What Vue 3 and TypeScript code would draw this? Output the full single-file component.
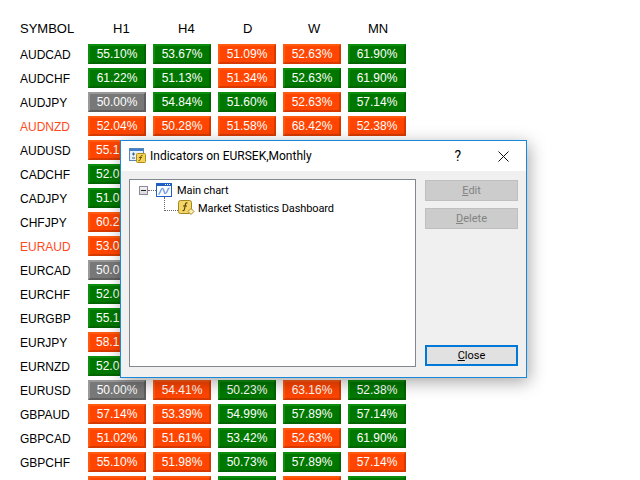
<script setup lang="ts">
type C = 'g' | 'o' | 'x'
interface Row { s: string; red?: boolean; v: [string, C][] }
const heads = ['H1', 'H4', 'D', 'W', 'MN']
const cc = (p: string): [string, C][] => p.split(' ').map((t) => {
  const k = t.slice(-1) as C
  return [t.slice(0, -1), k]
})
const rows: Row[] = [
  { s: 'AUDCAD', v: cc('55.10%g 53.67%g 51.09%o 52.63%o 61.90%g') },
  { s: 'AUDCHF', v: cc('61.22%g 51.13%g 51.34%o 52.63%g 61.90%g') },
  { s: 'AUDJPY', v: cc('50.00%x 54.84%g 51.60%g 52.63%o 57.14%g') },
  { s: 'AUDNZD', red: true, v: cc('52.04%o 50.28%o 51.58%o 68.42%o 52.38%o') },
  { s: 'AUDUSD', v: cc('55.1o') },
  { s: 'CADCHF', v: cc('52.0g') },
  { s: 'CADJPY', v: cc('51.0g') },
  { s: 'CHFJPY', v: cc('60.2o') },
  { s: 'EURAUD', red: true, v: cc('53.0o') },
  { s: 'EURCAD', v: cc('50.0x') },
  { s: 'EURCHF', v: cc('52.0g') },
  { s: 'EURGBP', v: cc('55.1g') },
  { s: 'EURJPY', v: cc('58.1o') },
  { s: 'EURNZD', v: cc('52.0g') },
  { s: 'EURUSD', v: cc('50.00%x 54.41%o 50.23%g 63.16%o 52.38%g') },
  { s: 'GBPAUD', v: cc('57.14%o 53.39%o 54.99%g 57.89%g 57.14%g') },
  { s: 'GBPCAD', v: cc('51.02%o 51.61%o 53.42%g 52.63%o 61.90%g') },
  { s: 'GBPCHF', v: cc('55.10%o 51.98%o 50.73%g 57.89%g 57.14%o') },
  { s: '', v: cc('o o g o g') },
]
</script>

<template>
  <div class="page">
    <div class="table">
      <div class="row head">
        <div class="sym">SYMBOL</div>
        <div v-for="h in heads" :key="h" class="hcell">{{ h }}</div>
      </div>
      <div v-for="(r, i) in rows" :key="i" class="row">
        <div class="sym" :class="{ red: r.red }">{{ r.s }}</div>
        <div v-for="(c, j) in r.v" :key="j" class="cell" :class="[c[1], { cut: r.v.length === 1 }]">{{ c[0] }}</div>
      </div>
    </div>

    <div class="dialog">
      <div class="titlebar">
        <svg class="ticon" width="18" height="16" viewBox="0 0 18 16">
          <rect x="0.500" y="0.500" width="14" height="12" fill="#e8f1fa" stroke="#5b87b8" />
          <rect x="1" y="1" width="13" height="2" fill="#3d7fc8" />
          <path d="M3 6h3M4.500 4.500v3M3 10h3" stroke="#3a5f88" fill="none" />
          <rect x="7.500" y="5.500" width="9" height="9" rx="1" fill="#f3d458" stroke="#b08a1c" />
          <path d="M13.500 7.500c-1.500-.5-1.500.5-2 2.500s-.5 3-2 2.500M10 9.500h3" stroke="#6b4e08" fill="none" />
        </svg>
        <span class="ttext">Indicators on EURSEK,Monthly</span>
        <span class="help">?</span>
        <svg class="close" width="11" height="11" viewBox="0 0 11 11">
          <path d="M.5.5l10 10M10.500.5l-10 10" stroke="#111" fill="none" />
        </svg>
      </div>
      <div class="body">
        <div class="tree">
          <div class="node">
            <span class="plus"></span>
            <span class="hdots"></span>
            <svg class="ic" width="16" height="14" viewBox="0 0 16 14">
              <rect x="0.500" y="0.500" width="15" height="13" fill="#fff" stroke="#1f5fc4" />
              <rect x="0" y="0" width="16" height="3" fill="#1f5fc4" />
              <path d="M9 1.500h1M11 1.500h1M13 1.500h1" stroke="#fff" fill="none" />
              <path d="M2.500 11.500c2-1 2-6 4-6s1 5 3 5 1.500-5 4-5.500" stroke="#7aa2e6" stroke-width="1.500" fill="none" />
            </svg>
            <span class="lbl">Main chart</span>
          </div>
          <div class="node child">
            <span class="elbow"></span>
            <svg class="ic" width="17" height="16" viewBox="0 0 17 16">
              <rect x="0.500" y="0.500" width="13" height="13" rx="2" fill="#f2d668" stroke="#a8861e" />
              <path d="M9.500 3c-2-.5-2 .5-2.500 3.500s-.5 4.500-2.500 4M5 6h4" stroke="#5c4508" stroke-width="1.200" fill="none" />
              <path d="M13 8.500l3 3-3 3-3-3z" fill="#fbeeb0" stroke="#a8861e" />
            </svg>
            <span class="lbl">Market Statistics Dashboard</span>
          </div>
        </div>
        <div class="side">
          <div class="btn off"><u>E</u>dit</div>
          <div class="btn off"><u>D</u>elete</div>
          <div class="btn def"><span><u>C</u>lose</span></div>
        </div>
      </div>
    </div>
  </div>
</template>

<style scoped>
.page {
  position: relative;
  width: 640px;
  height: 480px;
  overflow: hidden;
  background: #fff;
  font-family: "Liberation Sans", Arial, sans-serif;
}
.table {
  display: flex;
  flex-direction: column;
  gap: 4px;
  padding: 18px 0 0 20px;
}
.row {
  display: flex;
  gap: 7px;
  height: 20px;
  align-items: center;
  flex: none;
}
.head {
  margin-bottom: 2px;
}
.sym {
  width: 61px;
  padding-top: 1px;
  font-size: 12px;
  color: #000;
}
.head .sym { font-size: 13px; padding-top: 0; }
.red { color: #ff4a1c; }
.hcell {
  box-sizing: border-box;
  width: 58px;
  padding-left: 25px;
  font-size: 13px;
  color: #000;
}
.hcell:last-child { padding-left: 20px; }
.cell {
  box-sizing: border-box;
  width: 58px;
  height: 20px;
  border-style: solid;
  border-width: 2px;
  font-size: 12px;
  line-height: 17px;
  text-align: center;
  color: #fff;
}
.cut { text-align: left; padding-left: 6px; }
.g { background: #007800; border-color: #0e8e0e #006400 #006400 #0e8e0e; }
.o { background: #ff4500; border-color: #ff5a14 #d63a00 #d63a00 #ff5a14; }
.x { background: #787878; border-color: #999999 #5f5f5f #5f5f5f #999999; }

.dialog {
  position: absolute;
  left: 120px;
  top: 140px;
  width: 407px;
  height: 238px;
  box-sizing: border-box;
  border: 1px solid #1a88d8;
  background: #f0f0f0;
  box-shadow: 2px 4px 16px rgba(0, 0, 0, 0.35);
  font-family: Roboto, "Noto Sans", sans-serif;
  font-size: 12px;
  color: #000;
  display: flex;
  flex-direction: column;
}
.titlebar {
  height: 30px;
  background: #fff;
  display: flex;
  align-items: center;
  padding-left: 8px;
  flex: none;
}
.ttext { margin-left: 3px; flex: 1; }
.help { font-size: 14px; margin-right: 37px; }
.close { margin-right: 17px; }
.body {
  flex: 1;
  display: flex;
  gap: 9px;
  padding: 8px 8px 10px 8px;
}
.tree {
  width: 287px;
  box-sizing: border-box;
  border: 1px solid #828790;
  background: #fff;
  padding: 1px 0 0 9px;
  font-size: 11px;
  letter-spacing: -0.1px;
}
.node { display: flex; align-items: center; height: 18px; }
.plus {
  box-sizing: border-box;
  width: 9px;
  height: 9px;
  border: 1px solid #8a8a9a;
  background: linear-gradient(#f4f4f4, #d8d8d8);
  position: relative;
}
.plus::after {
  content: "";
  position: absolute;
  left: 1px;
  top: 3px;
  width: 5px;
  height: 1px;
  background: #222;
}
.hdots { width: 8px; border-top: 1px dotted #666; }
.lbl { margin-left: 5px; white-space: nowrap; }
.child { margin-left: 25px; }
.child .lbl { margin-left: 3px; }
.elbow {
  width: 14px;
  height: 14px;
  align-self: flex-start;
  margin-top: -2px;
  border-left: 1px dotted #666;
  border-bottom: 1px dotted #666;
  box-sizing: border-box;
  flex: none;
}
.side {
  width: 93px;
  display: flex;
  flex-direction: column;
  gap: 7px;
  padding: 1px 0;
  font-size: 11px;
}
.btn {
  box-sizing: border-box;
  height: 21px;
  display: flex;
  align-items: center;
  justify-content: center;
}
.off {
  background: #cccccc;
  border: 1px solid #bfbfbf;
  color: #838383;
}
.def {
  margin-top: auto;
  background: #e1e1e1;
  border: 2px solid #0078d7;
}
</style>
